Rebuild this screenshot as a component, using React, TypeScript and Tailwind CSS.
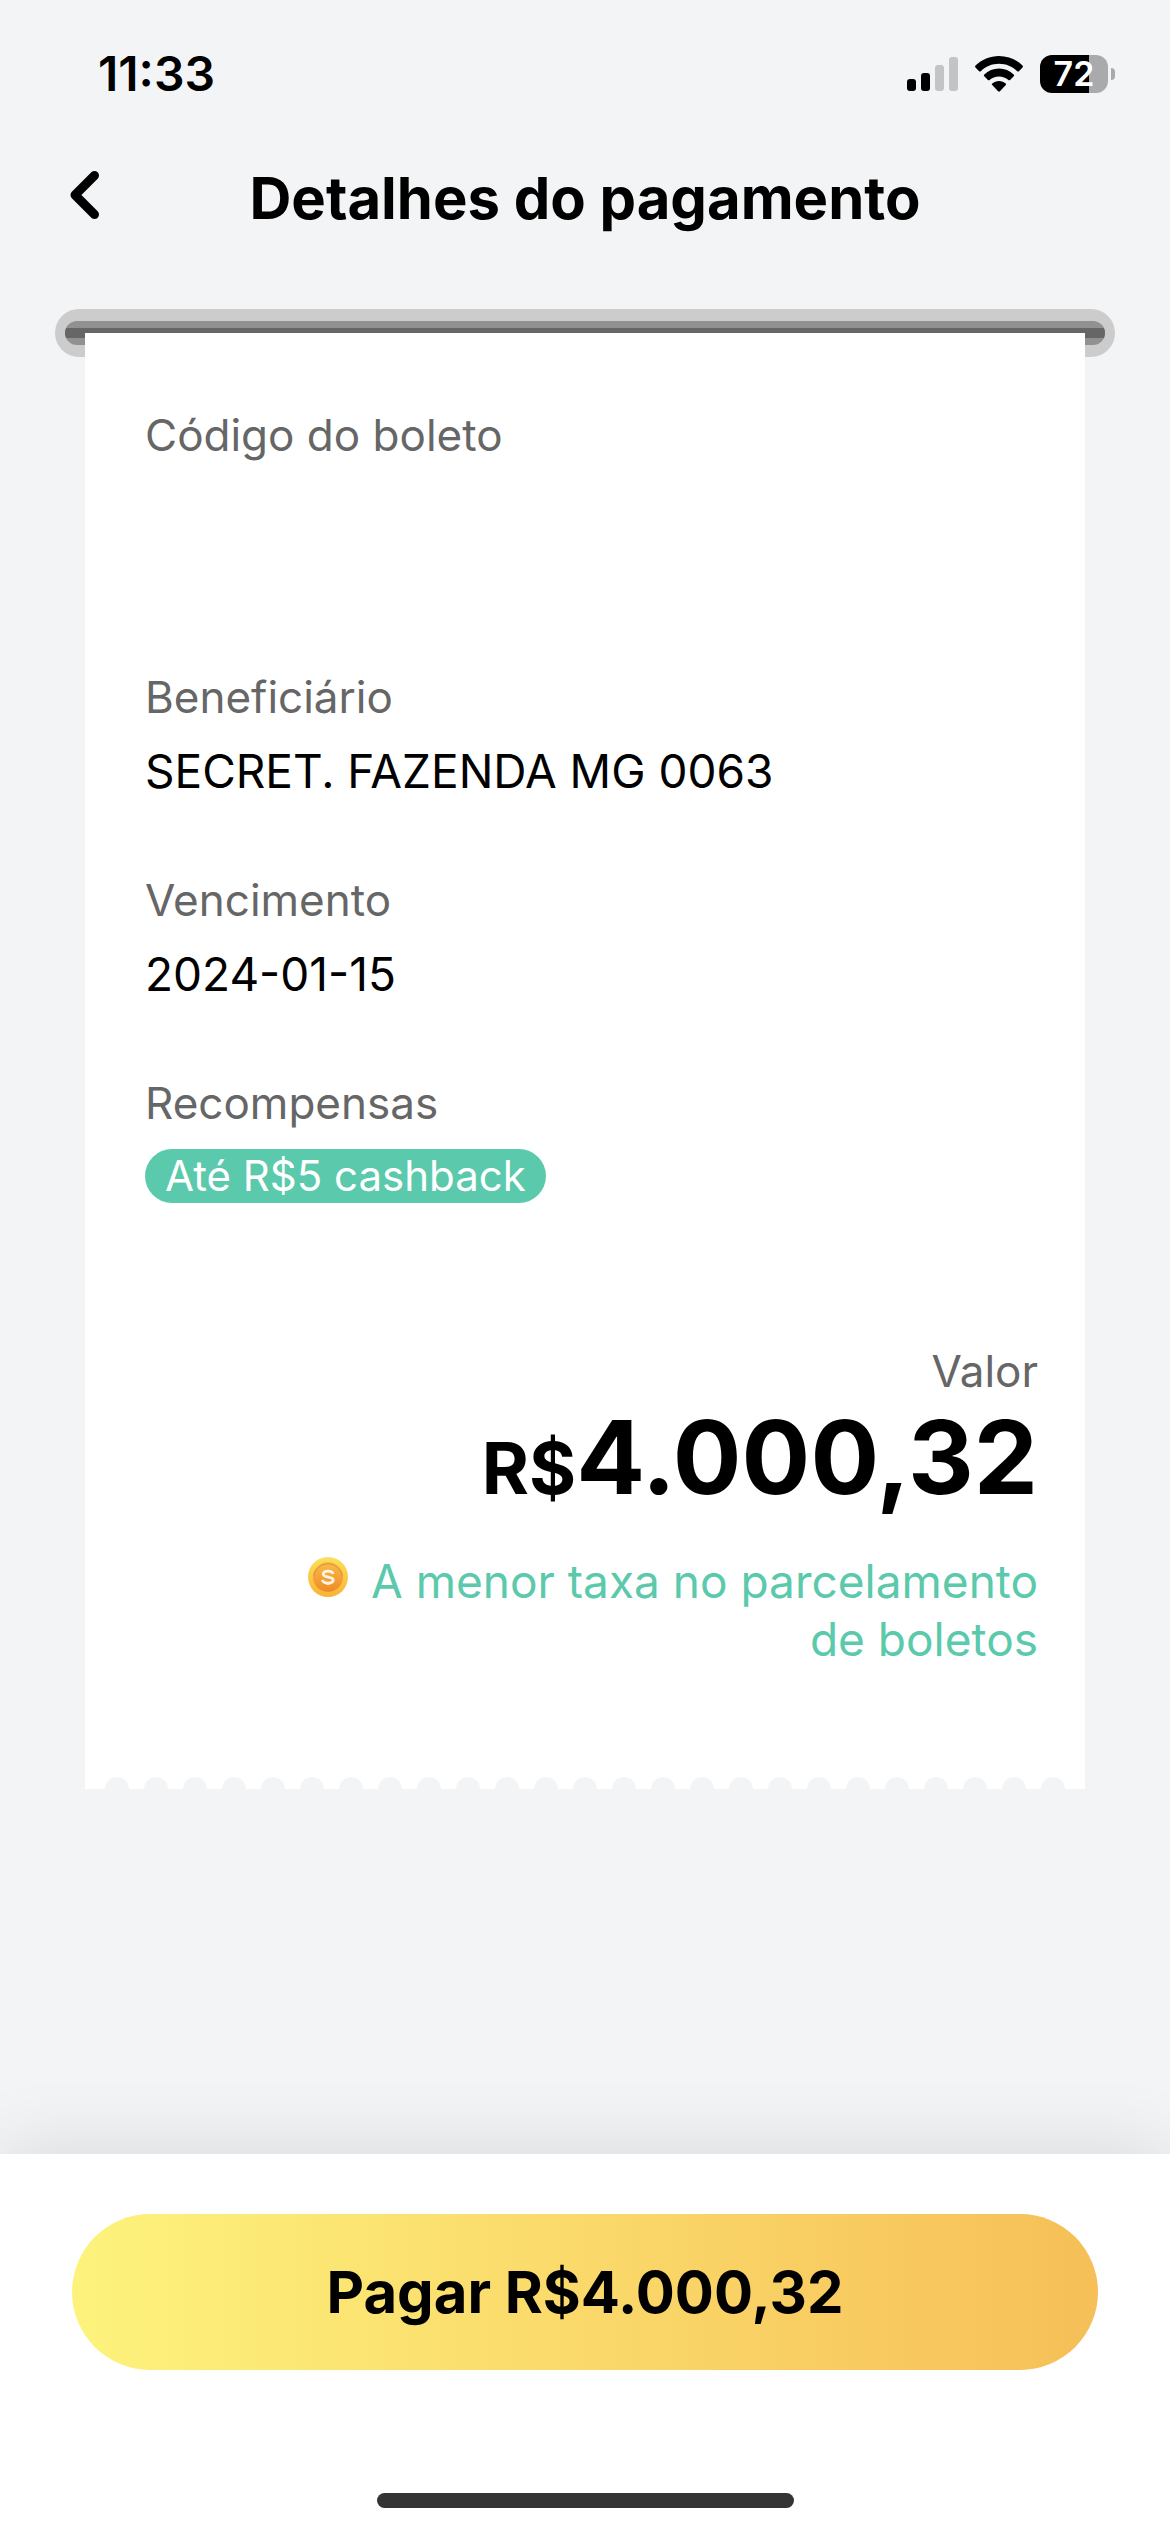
import React, { ReactNode } from 'react';

const HOLES = 25;

interface FieldProps {
  label: string;
  children?: ReactNode;
}

const Field: React.FC<FieldProps> = ({ label, children }) => (
  <div>
    <dt className="text-[44px] leading-[56px] text-[#666666]">{label}</dt>
    <dd className="mt-[18px] min-h-[56px] text-[46px] leading-[56px] text-black">{children}</dd>
  </div>
);

const SignalIcon = () => (
  <svg viewBox="0 0 51 34" className="h-[34px] w-[51px]" aria-hidden="true">
    <rect x="0" y="22" width="9" height="12" rx="3" />
    <rect x="14" y="16" width="9" height="18" rx="3" />
    <rect x="28" y="8" width="9" height="26" rx="3" fill="#c3c4c5" />
    <rect x="42" y="0" width="9" height="34" rx="3" fill="#c3c4c5" />
  </svg>
);

const WifiIcon = () => (
  <svg viewBox="0 0 48 36" className="h-9 w-12" aria-hidden="true">
    <path d="M24 0C15 0 6.600 3.500 .5 9.600c-.6.6-.6 1.300 0 1.900l3.600 3.700c.5.5 1.200.5 1.700 0C10.600 10.500 17 7.800 24 7.800s13.400 2.700 18.200 7.400c.5.5 1.200.5 1.700 0l3.600-3.700c.6-.6.6-1.300 0-1.900C41.400 3.500 33 0 24 0z" />
    <path d="M24 12.600c-5.700 0-10.800 2.200-14.700 5.800-.6.600-.6 1.300 0 1.900l3.600 3.600c.5.500 1.200.5 1.700.1 2.500-2.300 5.800-3.600 9.400-3.600s6.900 1.300 9.400 3.600c.5.4 1.200.4 1.700-.1l3.600-3.600c.6-.6.6-1.300 0-1.900-3.900-3.600-9-5.800-14.700-5.800z" />
    <path d="M24 25c-2.600 0-4.900.9-6.700 2.400-.6.500-.6 1.200-.1 1.700l5.900 6.100c.5.6 1.300.6 1.800 0l5.900-6.100c.5-.5.5-1.200-.1-1.700-1.800-1.500-4.100-2.400-6.700-2.400z" />
  </svg>
);

const Battery = () => (
  <div className="flex items-center gap-[3px]">
    <div className="flex h-[38px] w-[68px] items-center justify-center rounded-xl bg-linear-to-r from-black from-72% to-[#a9aaab] to-72% text-[34px] leading-[42px] font-semibold text-white">
      72
    </div>
    <div className="h-3 w-1 rounded-r-full bg-[#a9aaab]" />
  </div>
);

const CoinIcon = () => (
  <svg viewBox="0 0 40 40" className="mt-[5px] h-10 w-10 shrink-0" aria-hidden="true">
    <defs>
      <linearGradient id="coin-rim" x1="0" y1="0" x2="0" y2="1">
        <stop offset="0" stopColor="#fbe05c" />
        <stop offset="1" stopColor="#f7b436" />
      </linearGradient>
      <linearGradient id="coin-face" x1="0" y1="0" x2="0" y2="1">
        <stop offset="0" stopColor="#f8bd4c" />
        <stop offset="1" stopColor="#f08a24" />
      </linearGradient>
    </defs>
    <circle cx="20" cy="20" r="20" fill="url(#coin-rim)" />
    <circle cx="20" cy="20" r="15" fill="url(#coin-face)" />
    <path d="M5.500 19a14.700 14.700 0 0 1 29 0" fill="none" stroke="#dd9228" strokeWidth="1" />
    <path
      d="M25 17c-.3-2-2.200-2.800-5-2.800s-4.800.9-4.800 2.900c0 4.300 10 1.700 10 6 0 2-2.200 3-5.200 3s-5.200-1-5.500-3.200M20 12.800v2M20 26v2"
      fill="none"
      stroke="#fff3e6"
      strokeWidth="2.800"
    />
  </svg>
);

export default function App() {
  return (
    <div className="flex min-h-screen flex-col bg-[#f2f4f6] font-['Inter','Liberation_Sans',sans-serif] text-black">
      {/* Status bar */}
      <div className="flex items-center justify-between pt-[46px] pr-[55px] pl-[98px]">
        <span className="text-[48px] leading-[56px] font-semibold">11:33</span>
        <div className="flex items-center gap-[17px]">
          <SignalIcon />
          <WifiIcon />
          <Battery />
        </div>
      </div>

      {/* Header */}
      <header className="mt-14 flex items-center justify-between px-[60px]">
        <button type="button" aria-label="Voltar" className="flex h-20 w-12 items-center justify-center pb-1.5">
          <svg viewBox="0 0 29 48" className="h-12 w-[29px]" fill="none" aria-hidden="true">
            <path d="M24.500 4.500L5 24l19.500 19.500" stroke="#000" strokeWidth="9" strokeLinecap="round" strokeLinejoin="round" />
          </svg>
        </button>
        <h1 className="text-[58px] leading-[80px] font-bold">Detalhes do pagamento</h1>
        <div className="w-12" />
      </header>

      <main className="mt-[71px] flex-1 px-[55px] pb-20">
        {/* Printer slot */}
        <div className="h-12 rounded-full bg-[#cccccc] px-[10px] py-3">
          <div className="h-6 overflow-hidden rounded-full bg-[#919191] py-[7px]">
            <div className="h-[10px] bg-[#666666]" />
          </div>
        </div>

        {/* Receipt */}
        <section className="relative -mt-6 mx-[30px] bg-white">
          <dl className="flex flex-col gap-[73px] pt-[74px] pr-[47px] pl-[60px]">
            <div className="pb-[59px]">
              <Field label="Código do boleto" />
            </div>
            <Field label="Beneficiário">SECRET. FAZENDA MG 0063</Field>
            <Field label="Vencimento">2024-01-15</Field>
            <Field label="Recompensas">
              <span className="block w-fit rounded-full bg-[#5bc9ab] px-5 text-[42px] leading-[54px] text-white">
                Até R$5 cashback
              </span>
            </Field>
          </dl>

          <div className="mt-[138px] pr-[47px] pb-[109px] text-right">
            <p className="text-[44px] leading-[56px] text-[#666666]">Valor</p>
            <p className="text-[102px] leading-[116px] font-bold">
              <span className="text-[72px] leading-none">R$</span>4.000,32
            </p>
            <div className="mt-[37px] ml-auto flex w-[730px] justify-between">
              <CoinIcon />
              <p className="w-[670px] text-[46px] leading-[58px] text-[#5bc9ab]">
                A menor taxa no parcelamento de boletos
              </p>
            </div>
          </div>

          {/* Perforated edge */}
          <div className="flex justify-around px-3">
            {Array.from({ length: HOLES }, (_, i) => (
              <span key={i} className="h-3 w-6 rounded-t-full bg-[#f2f4f6]" />
            ))}
          </div>
        </section>
      </main>

      <footer className="bg-white px-[72px] pt-[60px] pb-6 shadow-[0_0_75px_rgba(0,0,0,0.12)]">
        <button
          type="button"
          className="h-[156px] w-full rounded-full bg-linear-to-r from-[#fdf37c] to-[#f6bf58] text-[58px] leading-[80px] font-bold"
        >
          Pagar R$4.000,32
        </button>
        <div className="mx-auto mt-[123px] h-[15px] w-[417px] rounded-full bg-[#343434]" />
      </footer>
    </div>
  );
}
